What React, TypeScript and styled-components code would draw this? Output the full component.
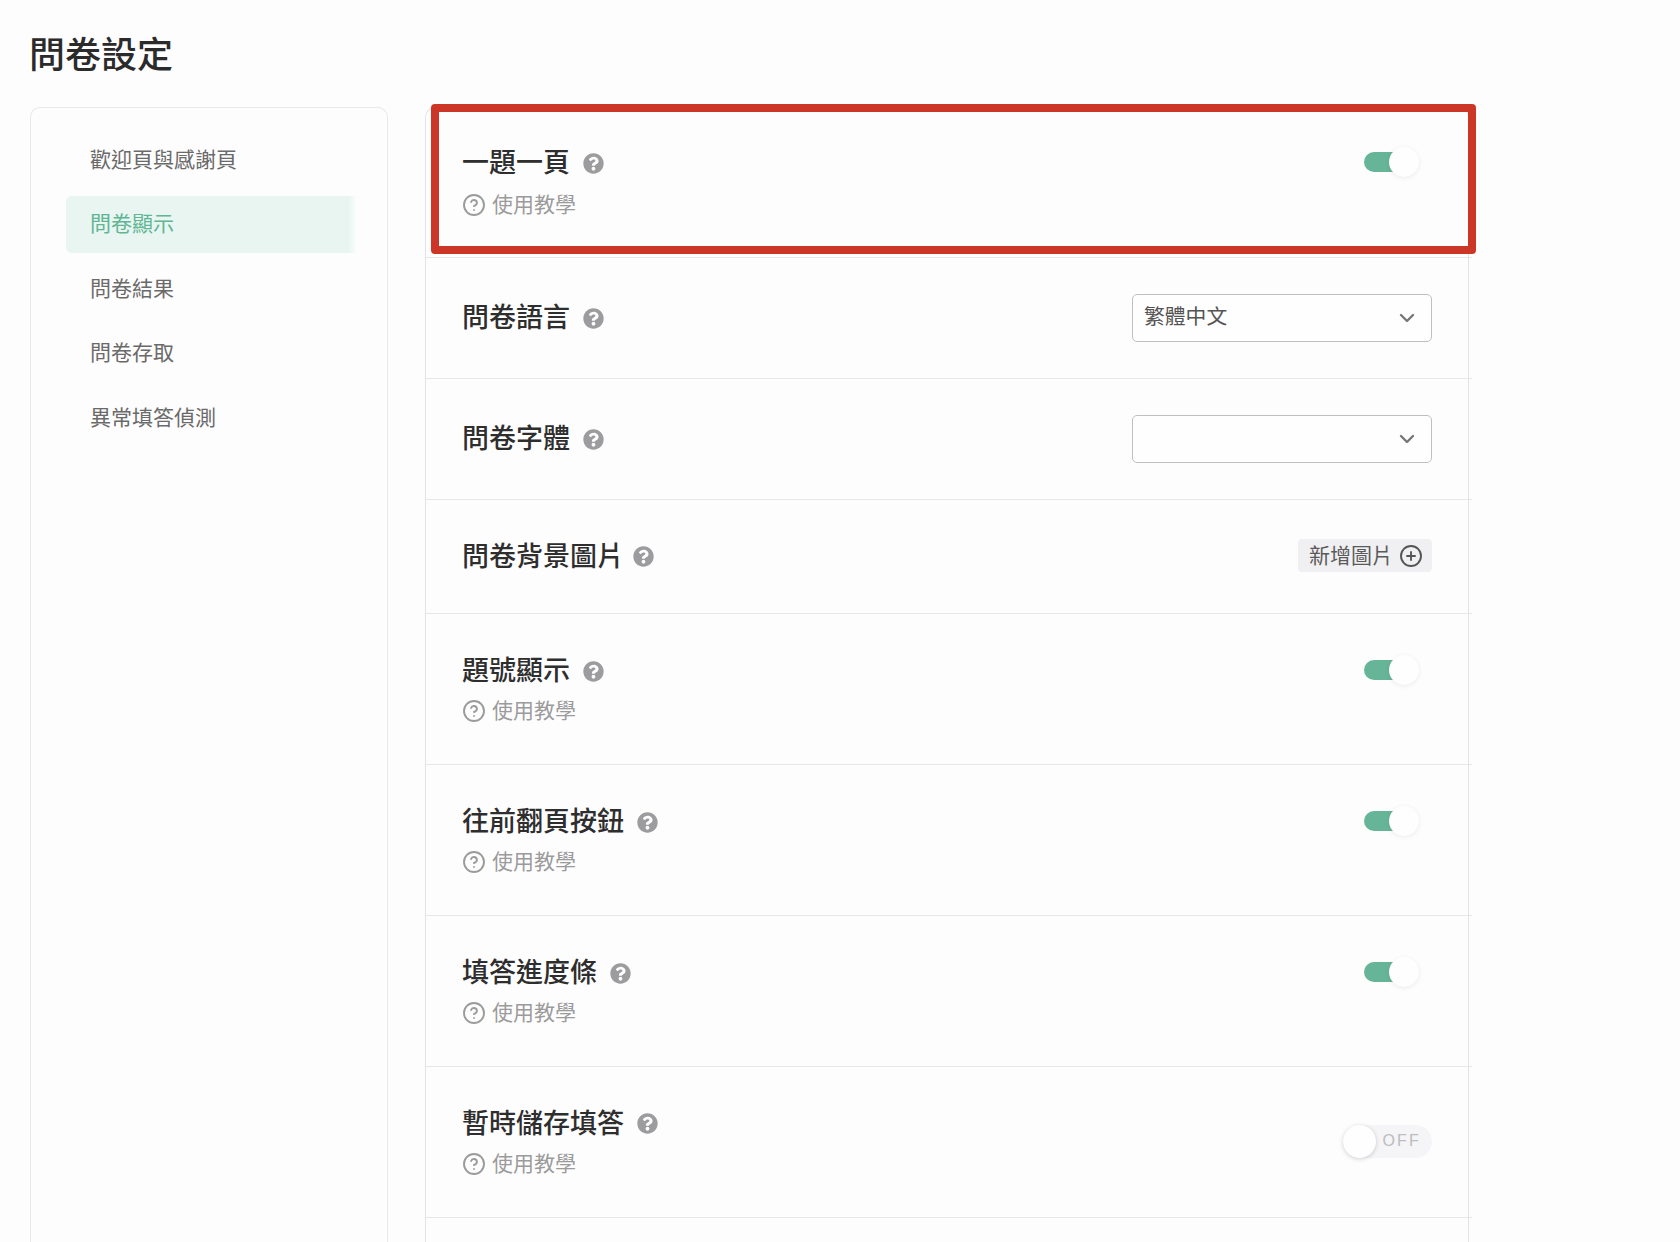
import styled, { createGlobalStyle } from "styled-components";
import { ChevronDown, CircleHelp, CirclePlus } from "lucide-react";
import { FaQuestionCircle } from "react-icons/fa";

const GlobalStyle = createGlobalStyle`
  html, body {
    margin: 0;
    padding: 0;
    background: #fefdfe;
    overflow: hidden;
  }
  * {
    box-sizing: border-box;
  }
`;

const Page = styled.div`
  display: flex;
  flex-direction: column;
  height: 100vh;
  padding-left: 30px;
  font-family: "Noto Sans CJK TC", "Noto Sans", sans-serif;
  color: #2e2e2e;
  background: #fefdfe;
`;

const PageHeader = styled.header`
  display: flex;
  align-items: center;
  height: 107px;
  padding-bottom: 4px;
  flex-shrink: 0;
`;

const PageTitle = styled.h1`
  margin: 0 0 0 -1px;
  font-size: 36px;
  font-weight: 500;
  line-height: 1;
  color: #2b2b2b;
`;

const Content = styled.div`
  display: flex;
  flex: 1;
  gap: 37px;
  min-height: 0;
`;

const SideCard = styled.nav`
  display: flex;
  flex-direction: column;
  gap: 7.5px;
  width: 358px;
  padding: 23px 30px 0 35px;
  border: 1px solid #e9e7eb;
  border-bottom: 0;
  border-radius: 10px 10px 0 0;
`;

const NavItem = styled.div<{ $active?: boolean }>`
  display: flex;
  align-items: center;
  height: 57px;
  padding: 0 0 4px 24px;
  font-size: 21px;
  color: ${(p) => (p.$active ? "#5fb595" : "#6a6a6a")};
  background: ${(p) =>
    p.$active
      ? "linear-gradient(90deg, #e8f5f0 0%, #e8f5f0 97%, #fefdfe 100%)"
      : "transparent"};
  border-radius: 6px 0 0 6px;
`;

const MainCard = styled.main`
  position: relative;
  width: 1044px;
  border: 1px solid #e4e2e6;
  border-bottom: 0;
  border-radius: 10px 10px 0 0;
`;

const Highlight = styled.div`
  position: absolute;
  top: -4px;
  left: 5px;
  width: 1045px;
  height: 150px;
  border: 8px solid #cc3626;
  border-radius: 4px;
`;

const RowText = styled.div<{ $lifted?: boolean }>`
  display: flex;
  flex-direction: column;
  gap: 6px;
  margin-bottom: ${(p) => (p.$lifted ? "3px" : "0")};
`;

const Row = styled.section<{ $height: number; $top?: boolean }>`
  display: flex;
  justify-content: space-between;
  align-items: ${(p) => (p.$top ? "flex-start" : "center")};
  height: ${(p) => p.$height}px;
  margin-right: -4px;
  padding: ${(p) => (p.$top ? "38px" : "0")} 40px 0 36px;
  border-bottom: 1px solid #e8e6ea;

  &:first-of-type {
    padding-top: 36px;
  }

  &:first-of-type ${RowText} {
    gap: 8px;
  }
`;

const TitleLine = styled.div<{ $gap?: number }>`
  display: flex;
  align-items: center;
  gap: ${(p) => p.$gap ?? 13}px;
  height: 36px;

  ${Row} > & {
    margin-bottom: 2px;
  }
`;

const RowTitle = styled.h2`
  margin: 0;
  padding-bottom: 2px;
  font-size: 27px;
  font-weight: 500;
  line-height: 36px;
  color: #2e2e2e;
`;

const HelpIcon = styled(FaQuestionCircle)`
  width: 21px;
  height: 21px;
  margin-top: 2px;
  color: #9c9b9e;
`;

const TutorialLink = styled.a`
  display: flex;
  align-items: center;
  gap: 6px;
  height: 30px;
  margin-left: 1px;
  font-size: 21px;
  line-height: 30px;
  color: #9b9b9b;

  svg {
    width: 24px;
    height: 24px;
    margin: 4px 0 0 -1px;
    color: #9b9b9b;
  }
`;

const SwitchSlot = styled.div`
  display: flex;
  align-items: center;
  height: 36px;
  margin-right: 13px;
`;

const SwitchOn = styled.div`
  position: relative;
  width: 55px;
  height: 20px;
`;

const SwitchTrack = styled.div`
  width: 40px;
  height: 20px;
  border-radius: 10px 0 0 10px;
  background: #66b599;
`;

const SwitchKnob = styled.div`
  position: absolute;
  top: -5px;
  right: 0;
  width: 30px;
  height: 30px;
  border-radius: 50%;
  background: #fefefe;
  box-shadow: 0 1px 4px rgba(60, 60, 70, 0.1);
`;

const SwitchOff = styled.div`
  position: relative;
  display: flex;
  align-items: center;
  justify-content: flex-end;
  width: 89px;
  height: 33px;
  margin-bottom: 2px;
  padding-right: 11px;
  border-radius: 17px;
  background: #f5f4f6;
  font-family: "Liberation Sans", sans-serif;
  font-size: 16px;
  letter-spacing: 2.2px;
  color: #bdbcbf;
`;

const SwitchOffKnob = styled.div`
  position: absolute;
  top: 0;
  left: 0;
  width: 33px;
  height: 33px;
  border-radius: 50%;
  background: #fefefe;
  box-shadow: 0 1px 4px rgba(60, 60, 70, 0.24);
`;

const Select = styled.div`
  display: flex;
  align-items: center;
  justify-content: space-between;
  width: 300px;
  height: 48px;
  padding: 0 12px 6px 11px;
  border: 1px solid #bfbec2;
  border-radius: 5px;
  background: #fefefe;
  font-size: 20.8px;
  color: #545454;

  svg {
    width: 24px;
    height: 24px;
    margin-bottom: -6px;
    color: #777;
  }
`;

const AddButton = styled.div`
  display: flex;
  align-items: center;
  gap: 6px;
  height: 33px;
  margin-bottom: 2px;
  padding: 0 9px 4px 11px;
  border-radius: 4px;
  background: #f0eff1;
  font-size: 21px;
  color: #5a5a5a;

  svg {
    width: 24px;
    height: 24px;
    margin-bottom: -4px;
    color: #555;
  }
`;

const navItems = ["歡迎頁與感謝頁", "問卷顯示", "問卷結果", "問卷存取", "異常填答偵測"];

const Title = ({ children, gap }: { children: string; gap?: number }) => (
  <TitleLine $gap={gap}>
    <RowTitle>{children}</RowTitle>
    <HelpIcon />
  </TitleLine>
);

const Tutorial = () => (
  <TutorialLink>
    <CircleHelp strokeWidth={1.9} />
    使用教學
  </TutorialLink>
);

const OnSwitch = () => (
  <SwitchSlot>
    <SwitchOn>
      <SwitchTrack />
      <SwitchKnob />
    </SwitchOn>
  </SwitchSlot>
);

const ToggleRow = ({ title }: { title: string }) => (
  <Row $height={151} $top>
    <RowText>
      <Title>{title}</Title>
      <Tutorial />
    </RowText>
    <OnSwitch />
  </Row>
);

export default function App() {
  return (
    <Page>
      <GlobalStyle />
      <PageHeader>
        <PageTitle>問卷設定</PageTitle>
      </PageHeader>
      <Content>
        <SideCard>
          {navItems.map((item) => (
            <NavItem key={item} $active={item === "問卷顯示"}>
              {item}
            </NavItem>
          ))}
        </SideCard>
        <MainCard>
          <Row $height={150} $top>
            <RowText>
              <Title>一題一頁</Title>
              <Tutorial />
            </RowText>
            <OnSwitch />
          </Row>
          <Row $height={121}>
            <Title>問卷語言</Title>
            <Select>
              繁體中文
              <ChevronDown strokeWidth={2.4} />
            </Select>
          </Row>
          <Row $height={121}>
            <Title>問卷字體</Title>
            <Select>
              <span />
              <ChevronDown strokeWidth={2.4} />
            </Select>
          </Row>
          <Row $height={114}>
            <Title gap={9}>問卷背景圖片</Title>
            <AddButton>
              新增圖片
              <CirclePlus strokeWidth={1.9} />
            </AddButton>
          </Row>
          <ToggleRow title="題號顯示" />
          <ToggleRow title="往前翻頁按鈕" />
          <ToggleRow title="填答進度條" />
          <Row $height={151}>
            <RowText $lifted>
              <Title>暫時儲存填答</Title>
              <Tutorial />
            </RowText>
            <SwitchOff>
              OFF
              <SwitchOffKnob />
            </SwitchOff>
          </Row>
          <Highlight />
        </MainCard>
      </Content>
    </Page>
  );
}
